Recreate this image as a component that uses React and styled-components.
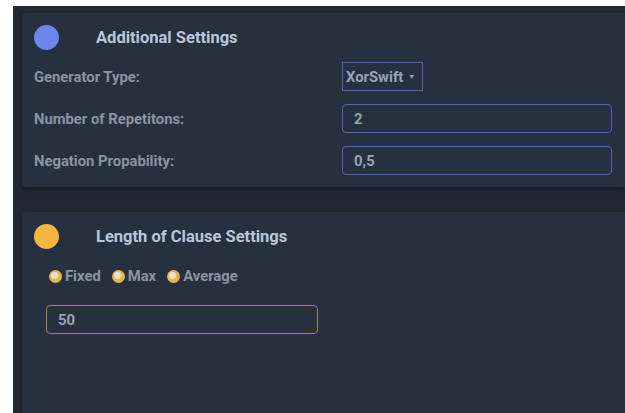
import React from 'react';
import styled, { createGlobalStyle } from 'styled-components';

const GlobalStyle = createGlobalStyle`
  html, body {
    margin: 0;
    padding: 0;
    background: #ffffff;
    width: 625px;
    height: 413px;
    overflow: hidden;
  }
  * { box-sizing: border-box; }
`;

const Page = styled.div`
  margin: 6px 0 0 13px;
  height: 407px;
  background: #222935;
  padding: 7px 0 0 9px;
  display: flex;
  flex-direction: column;
  gap: 25px;
  font-family: Roboto, 'Liberation Sans', sans-serif;
  overflow: hidden;
`;

const Card = styled.section`
  background: #27303f;
  border-radius: 4px 0 0 4px;
  box-shadow: 0 2px 4px rgba(0, 0, 0, 0.35);
  padding: 12px 0 0 12px;
  height: ${(p) => p.$h}px;
  flex-shrink: 0;
`;

const Header = styled.div`
  display: flex;
  align-items: center;
  height: 25px;
  margin-bottom: ${(p) => p.$gap}px;
`;

const Dot = styled.span`
  width: 25px;
  height: 25px;
  border-radius: 50%;
  background: ${(p) => p.$color};
  margin-right: 37px;
`;

const Title = styled.h2`
  margin: 0;
  font-size: 16.5px;
  font-weight: 700;
  color: #bac6dc;
`;

const Row = styled.div`
  display: grid;
  grid-template-columns: 308px 270px;
  align-items: center;
  margin-bottom: 13px;
`;

const Label = styled.span`
  font-size: 14.8px;
  font-weight: 700;
  color: #8a94a5;
`;

const Select = styled.div`
  width: 81px;
  height: 29px;
  border: 1.5px solid #5363a8;
  display: flex;
  align-items: center;
  padding-left: 3px;
  font-size: 14.8px;
  font-weight: 700;
  color: #9aa3b2;
  gap: 5px;
  white-space: nowrap;
`;

const Caret = styled.span`
  font-size: 7px;
  color: #9aa3b2;
`;

const Field = styled.div`
  width: ${(p) => p.$w}px;
  height: 29px;
  border: 1.5px solid ${(p) => p.$border};
  border-radius: 4px;
  display: flex;
  align-items: center;
  padding-left: 11px;
  font-size: 14.8px;
  font-weight: 700;
  color: #9aa3b2;
`;

const Radios = styled.div`
  display: flex;
  align-items: center;
  gap: 11px;
  margin: 0 0 16px 15px;
  height: 26px;
`;

const RadioItem = styled.label`
  display: flex;
  align-items: center;
  gap: 3px;
  font-size: 14.8px;
  font-weight: 700;
  color: #8a94a5;
`;

const RadioDot = styled.span`
  width: 13px;
  height: 13px;
  border-radius: 50%;
  background: #e9b446;
  position: relative;
  &::after {
    content: '';
    position: absolute;
    left: 2px;
    top: 2px;
    width: 7px;
    height: 7px;
    border-radius: 50%;
    background: #e6e1d6;
  }
`;

const ClauseBody = styled.div`
  padding-left: 12px;
`;

export default function App() {
  return (
    <>
      <GlobalStyle />
      <Page>
        <Card $h={174}>
          <Header $gap={12}>
            <Dot $color="#6c86ee" />
            <Title>Additional Settings</Title>
          </Header>
          <Row>
            <Label>Generator Type:</Label>
            <Select>
              XorSwift <Caret>▼</Caret>
            </Select>
          </Row>
          <Row>
            <Label>Number of Repetitons:</Label>
            <Field $w={270} $border="#5363a8">2</Field>
          </Row>
          <Row>
            <Label>Negation Propability:</Label>
            <Field $w={270} $border="#5363a8">0,5</Field>
          </Row>
        </Card>
        <Card $h={220}>
          <Header $gap={14}>
            <Dot $color="#f5b73d" />
            <Title>Length of Clause Settings</Title>
          </Header>
          <Radios>
            <RadioItem><RadioDot />Fixed</RadioItem>
            <RadioItem><RadioDot />Max</RadioItem>
            <RadioItem><RadioDot />Average</RadioItem>
          </Radios>
          <ClauseBody>
            <Field $w={272} $border="#9a8756">50</Field>
          </ClauseBody>
        </Card>
      </Page>
    </>
  );
}
